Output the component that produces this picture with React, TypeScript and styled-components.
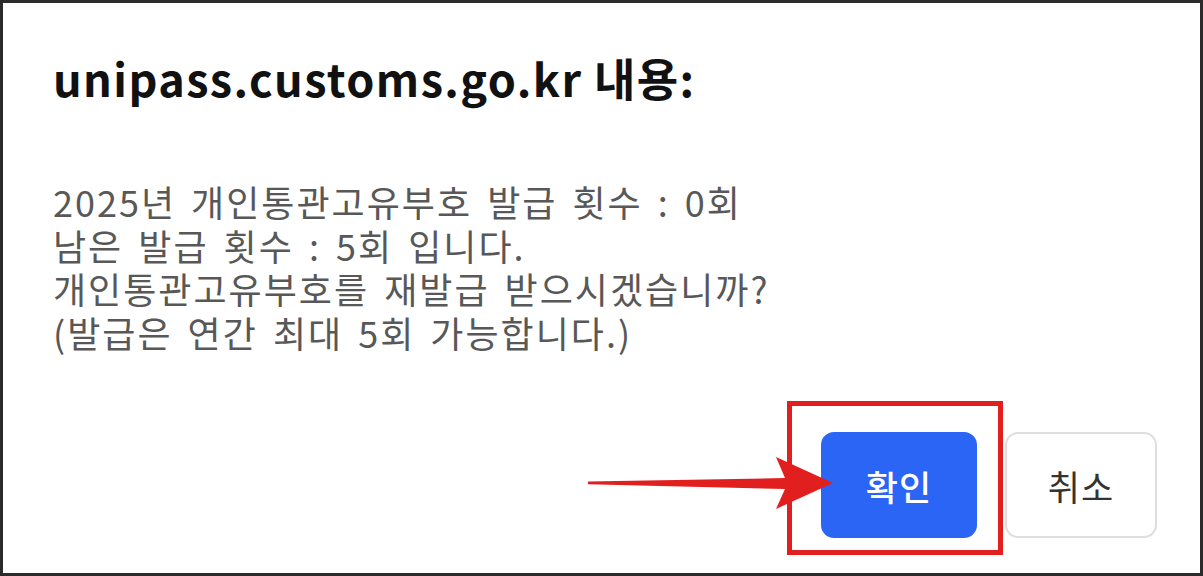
import React from 'react';
import styled, { createGlobalStyle } from 'styled-components';

const FONT = `"Noto Sans CJK KR", "Noto Sans", sans-serif`;

const GlobalStyle = createGlobalStyle`
  html, body {
    margin: 0;
    padding: 0;
    background: #ffffff;
  }
  * {
    box-sizing: border-box;
  }
`;

const LINES = [
  '2025년 개인통관고유부호 발급 횟수 : 0회',
  '남은 발급 횟수 : 5회 입니다.',
  '개인통관고유부호를 재발급 받으시겠습니까?',
  '(발급은 연간 최대 5회 가능합니다.)',
];

const App = () => (
  <>
    <GlobalStyle />
    <Frame>
      <Title>unipass.customs.go.kr 내용:</Title>
      <Message>
        {LINES.map((line) => (
          <Line key={line}>{line}</Line>
        ))}
      </Message>
      <ButtonRow>
        <Button $primary>확인</Button>
        <Button>취소</Button>
      </ButtonRow>

      {/* annotation drawn on top of the dialog */}
      <Highlight />
      <Arrow viewBox="0 0 260 65" aria-hidden>
        <polygon
          points="8,31.6 205,28 196,7 253,33 196,59 205,39 8,34.2"
          fill="#e21f1f"
        />
      </Arrow>
    </Frame>
  </>
);

const Frame = styled.div`
  position: relative;
  width: 1203px;
  height: 576px;
  border: 3px solid #2b2b2b;
  background: #ffffff;
  padding: 47px 43px 0 50px;
  display: flex;
  flex-direction: column;
  font-family: ${FONT};
  overflow: hidden;
`;

const Title = styled.h1`
  margin: 0;
  font-size: 45px;
  line-height: 55px;
  font-weight: 700;
  color: #111111;
  letter-spacing: 1.4px;
`;

const Message = styled.div`
  margin-top: 75px;
  display: flex;
  flex-direction: column;
`;

const Line = styled.p`
  margin: 0;
  font-size: 36px;
  line-height: 43.5px;
  font-weight: 400;
  color: #585858;
  letter-spacing: 2px;
  word-spacing: 5px;
  white-space: nowrap;
`;

const ButtonRow = styled.div`
  margin-top: 78px;
  display: flex;
  justify-content: flex-end;
  gap: 28px;
`;

const Button = styled.button<{ $primary?: boolean }>`
  width: ${(p) => (p.$primary ? 156 : 152)}px;
  height: 106px;
  border-radius: 13px;
  border: 2px solid ${(p) => (p.$primary ? '#2b65f5' : '#dedede')};
  background: ${(p) => (p.$primary ? '#2b65f5' : '#ffffff')};
  color: ${(p) => (p.$primary ? '#ffffff' : '#333333')};
  font-family: ${FONT};
  font-size: 35px;
  font-weight: ${(p) => (p.$primary ? 500 : 400)};
  letter-spacing: 1px;
  padding: 0;
  display: flex;
  align-items: center;
  justify-content: center;
  cursor: pointer;
`;

const Highlight = styled.div`
  position: absolute;
  left: 784px;
  top: 398px;
  width: 216px;
  height: 154px;
  border: 5px solid #e21f1f;
  pointer-events: none;
`;

const Arrow = styled.svg`
  position: absolute;
  left: 577px;
  top: 447px;
  width: 260px;
  height: 65px;
  pointer-events: none;
`;

export default App;
